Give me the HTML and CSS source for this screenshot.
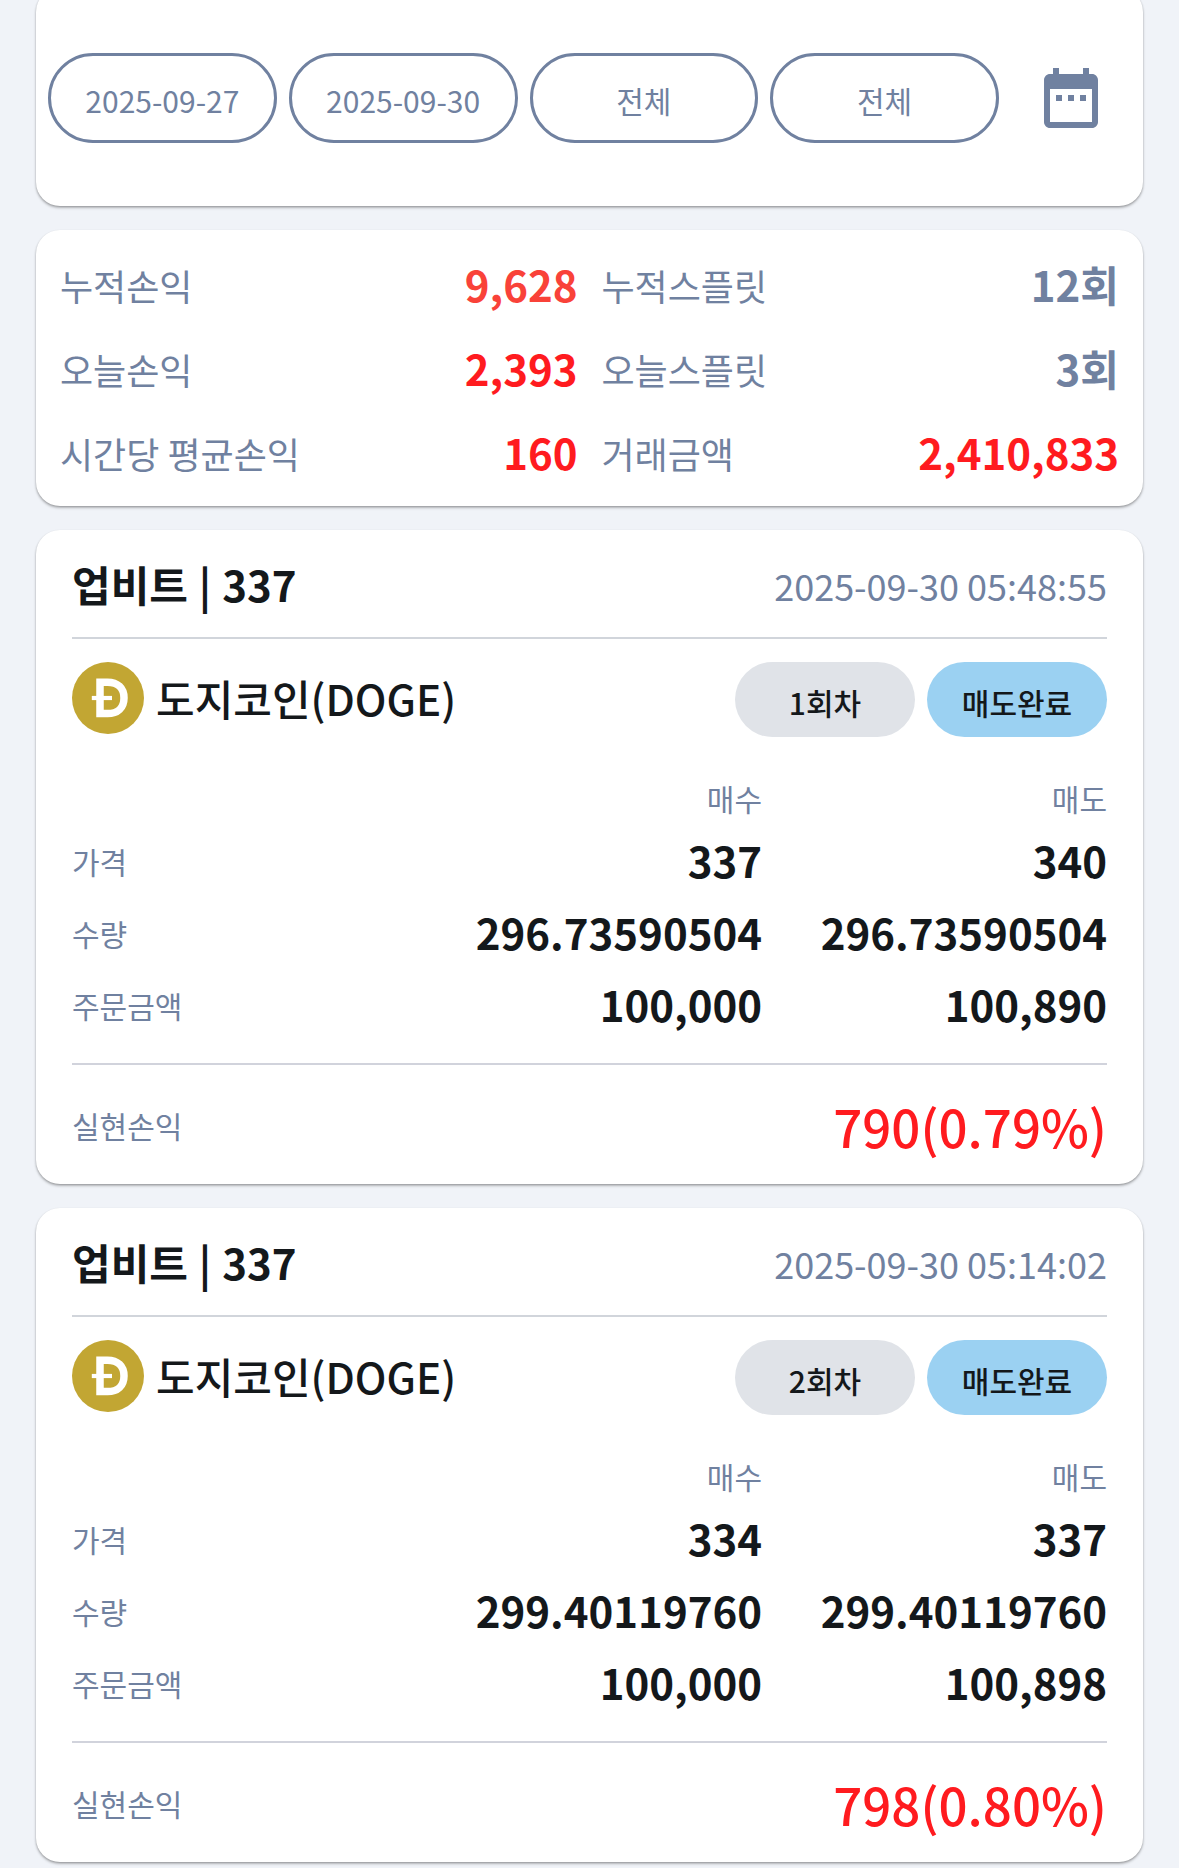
FILE: index.html
```html
<!DOCTYPE html>
<html lang="ko">
<head>
<meta charset="utf-8">
<title>거래내역</title>
<link rel="stylesheet" href="styles.css">
</head>
<body>
<main class="page">
  <section class="card filters">
    <button class="filter">2025-09-27</button>
    <button class="filter">2025-09-30</button>
    <button class="filter">전체</button>
    <button class="filter">전체</button>
    <div class="calendar">
      <svg class="calendar-icon" viewBox="0 0 24 24"><path d="M9 11H7v2h2v-2zm4 0h-2v2h2v-2zm4 0h-2v2h2v-2zm2-7h-1V2h-2v2H8V2H6v2H5c-1.11 0-1.99.9-1.99 2L3 20c0 1.1.89 2 2 2h14c1.1 0 2-.9 2-2V6c0-1.1-.9-2-2-2zm0 16H5V9h14v11z"/></svg>
    </div>
  </section>

  <section class="card summary">
    <div class="stat"><span>누적손익</span><b class="soft-red">9,628</b></div>
    <div class="stat"><span>누적스플릿</span><b>12회</b></div>
    <div class="stat"><span>오늘손익</span><b class="red">2,393</b></div>
    <div class="stat"><span>오늘스플릿</span><b>3회</b></div>
    <div class="stat"><span>시간당 평균손익</span><b class="red">160</b></div>
    <div class="stat"><span>거래금액</span><b class="red">2,410,833</b></div>
  </section>

  <article class="card trade">
    <header class="trade-head"><h2>업비트 | 337</h2><time>2025-09-30 05:48:55</time></header>
    <div class="coin">
      <svg class="coin-icon" viewBox="0 0 72 72"><circle cx="36" cy="36" r="36" fill="#c2a633"/><path fill="none" stroke="#fff" stroke-width="7.5" d="M28 20.2H35.5C45.5 20.2 52 26 52 35.9S45.5 51.6 35.5 51.6H28Z"/><path fill="#fff" d="M19.8 33.9h20.2v4.2H19.8z"/></svg>
      <h3>도지코인(DOGE)</h3>
      <span class="badge">1회차</span><span class="badge done">매도완료</span>
    </div>
    <div class="figures">
      <span class="col buy">매수</span><span class="col">매도</span>
      <span>가격</span><b>337</b><b>340</b>
      <span>수량</span><b>296.73590504</b><b>296.73590504</b>
      <span>주문금액</span><b>100,000</b><b>100,890</b>
    </div>
    <footer class="profit"><span>실현손익</span><strong>790(0.79%)</strong></footer>
  </article>

  <article class="card trade">
    <header class="trade-head"><h2>업비트 | 337</h2><time>2025-09-30 05:14:02</time></header>
    <div class="coin">
      <svg class="coin-icon" viewBox="0 0 72 72"><circle cx="36" cy="36" r="36" fill="#c2a633"/><path fill="none" stroke="#fff" stroke-width="7.5" d="M28 20.2H35.5C45.5 20.2 52 26 52 35.9S45.5 51.6 35.5 51.6H28Z"/><path fill="#fff" d="M19.8 33.9h20.2v4.2H19.8z"/></svg>
      <h3>도지코인(DOGE)</h3>
      <span class="badge">2회차</span><span class="badge done">매도완료</span>
    </div>
    <div class="figures">
      <span class="col buy">매수</span><span class="col">매도</span>
      <span>가격</span><b>334</b><b>337</b>
      <span>수량</span><b>299.40119760</b><b>299.40119760</b>
      <span>주문금액</span><b>100,000</b><b>100,898</b>
    </div>
    <footer class="profit"><span>실현손익</span><strong>798(0.80%)</strong></footer>
  </article>
</main>
</body>
</html>
```
FILE: styles.css
```css
* { box-sizing: border-box; margin: 0; }

body {
  height: 1868px;
  overflow: hidden;
  background: #f0f3f8;
  color: #14181b;
  font: 400 30px/1.448 "Noto Sans CJK KR", sans-serif;
  font-feature-settings: "calt" 0, "ccmp" 0, "locl" 0;
}

.page { display: flex; flex-direction: column; gap: 24px; padding: 0 36px; }

.card {
  background: #fff;
  border-radius: 24px;
  box-shadow: 0 2px 3px rgba(0, 0, 0, .22), 0 1px 2px rgba(0, 0, 0, .2);
}

.filters {
  display: flex;
  align-items: center;
  gap: 12px;
  height: 218px;
  margin-top: -12px;
  padding: 2px 12px 0;
}
.filter {
  flex: 1;
  height: 90px;
  padding: 5px 0 0;
  border: 3px solid #7081a0;
  border-radius: 45px;
  background: none;
  color: #7081a0;
  font: inherit;
  font-feature-settings: inherit;
}
.calendar { display: flex; justify-content: center; width: 120px; }
.calendar-icon { width: 72px; height: 72px; fill: #7081a0; }

.summary {
  display: grid;
  grid-template-columns: 1fr 1fr;
  column-gap: 24px;
  padding: 12px 24px;
  color: #7081a0;
  font-size: 36px;
}
.stat { display: flex; align-items: center; justify-content: space-between; height: 84px; }
.stat span { padding-top: 3px; }
.stat b { padding-top: 1px; font-size: 42px; }
.stat .red { color: #ff1b1f; }
.stat .soft-red { color: #f94239; }

.trade { height: 654px; padding: 0 36px; }
.trade-head {
  display: flex;
  align-items: center;
  justify-content: space-between;
  height: 109px;
  border-bottom: 2px solid #d1d5db;
}
.trade-head h2 { padding-top: 2px; font-size: 42px; font-weight: 700; word-spacing: 1.4px; }
.trade-head time { padding-top: 3px; color: #7081a0; font-size: 36px; }

.coin { display: flex; gap: 12px; height: 98px; padding-top: 23px; }
.coin-icon { width: 72px; height: 72px; }
.coin h3 { flex: 1; height: 72px; font-size: 42px; font-weight: 500; line-height: 72px; }
.badge {
  width: 180px;
  height: 75px;
  padding-top: 5px;
  border-radius: 38px;
  background: #e0e3e8;
  font-weight: 500;
  line-height: 70px;
  text-align: center;
}
.badge.done { background: #9bd1f2; }

.figures {
  display: grid;
  grid-template-columns: repeat(3, 1fr);
  grid-template-rows: 54px repeat(3, 72px);
  align-items: center;
  padding: 33px 0 23px;
  border-bottom: 2px solid #d1d3dc;
}
.figures span { padding-top: 3px; color: #7081a0; }
.figures .col { text-align: right; }
.figures .buy { grid-column: 2; }
.figures b { text-align: right; font-size: 42px; }

.profit { display: flex; align-items: center; justify-content: space-between; height: 119px; color: #7081a0; }
.profit span { padding-top: 3px; }
.profit strong { padding-top: 5px; color: #ff1b1f; font-size: 51px; font-weight: 500; }
```
